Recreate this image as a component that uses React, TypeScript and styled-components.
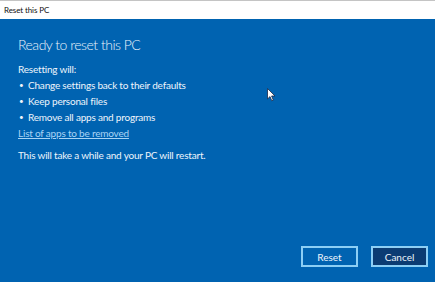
import React from "react";
import styled, { createGlobalStyle } from "styled-components";

const GlobalStyle = createGlobalStyle`
  html, body {
    margin: 0;
    padding: 0;
    background: #0063b1;
  }
  #root {
    width: 435px;
    height: 282px;
  }
`;

const Window = styled.div`
  position: relative;
  width: 435px;
  height: 282px;
  display: flex;
  flex-direction: column;
  font-family: Lato, "Open Sans", sans-serif;
  overflow: hidden;
`;

const TitleBar = styled.div`
  height: 18px;
  border-top: 1px solid #c4c4c4;
  background: #ffffff;
  display: flex;
  align-items: center;
  padding-left: 4px;
  font-size: 8px;
  letter-spacing: -0.1px;
  color: #111;
`;

const Body = styled.div`
  flex: 1;
  background: #0063b1;
  display: flex;
  flex-direction: column;
  padding: 15px 7px 15px 18px;
  color: #eef5fc;
`;

const Heading = styled.h1`
  margin: 0 0 5px;
  font-weight: 300;
  font-size: 14px;
  letter-spacing: -0.5px;
  line-height: 22px;
  color: #e8f2fb;
`;

const Line = styled.div`
  font-size: 10px;
  letter-spacing: -0.2px;
  line-height: 16px;
  white-space: nowrap;
`;

const List = styled.ul`
  margin: 0;
  padding: 0;
  list-style: none;
`;

const Item = styled.li`
  font-size: 10px;
  letter-spacing: -0.2px;
  line-height: 16px;
  padding-left: 10px;
  position: relative;
  &::before {
    content: "•";
    position: absolute;
    left: 1px;
    font-size: 8px;
  }
`;

const AppLink = styled.a`
  font-size: 10px;
  letter-spacing: -0.2px;
  line-height: 16px;
  color: #a9d4f5;
  text-decoration: underline;
  text-underline-offset: 1px;
  align-self: flex-start;
  margin-bottom: 6px;
`;

const Footer = styled.div`
  margin-top: auto;
  display: flex;
  justify-content: flex-end;
  gap: 13px;
`;

const Button = styled.button<{ $primary?: boolean }>`
  width: 57px;
  height: 21px;
  box-sizing: border-box;
  border: 2px solid #8ccff5;
  background: ${(p) => (p.$primary ? "#0b3c73" : "transparent")};
  color: #eef5fc;
  font-family: Lato, "Open Sans", sans-serif;
  font-size: 10px;
  padding: 0;
`;

const Cursor = styled.svg`
  position: absolute;
  left: 267px;
  top: 88px;
`;

export default function App() {
  return (
    <>
      <GlobalStyle />
      <Window>
        <TitleBar>Reset this PC</TitleBar>
        <Body>
          <Heading>Ready to reset this PC</Heading>
          <Line>Resetting will:</Line>
          <List>
            <Item>Change settings back to their defaults</Item>
            <Item>Keep personal files</Item>
            <Item>Remove all apps and programs</Item>
          </List>
          <AppLink>List of apps to be removed</AppLink>
          <Line>This will take a while and your PC will restart.</Line>
          <Footer>
            <Button>Reset</Button>
            <Button $primary>Cancel</Button>
          </Footer>
        </Body>
        <Cursor width="9" height="14" viewBox="0 0 9 14">
          <path d="M0.5 0.5 L0.5 11 L3 8.6 L4.8 12.8 L6.3 12.1 L4.6 8 L8 8 Z" fill="#ffffff" stroke="#1a2a4a" strokeWidth="0.8" />
        </Cursor>
      </Window>
    </>
  );
}
